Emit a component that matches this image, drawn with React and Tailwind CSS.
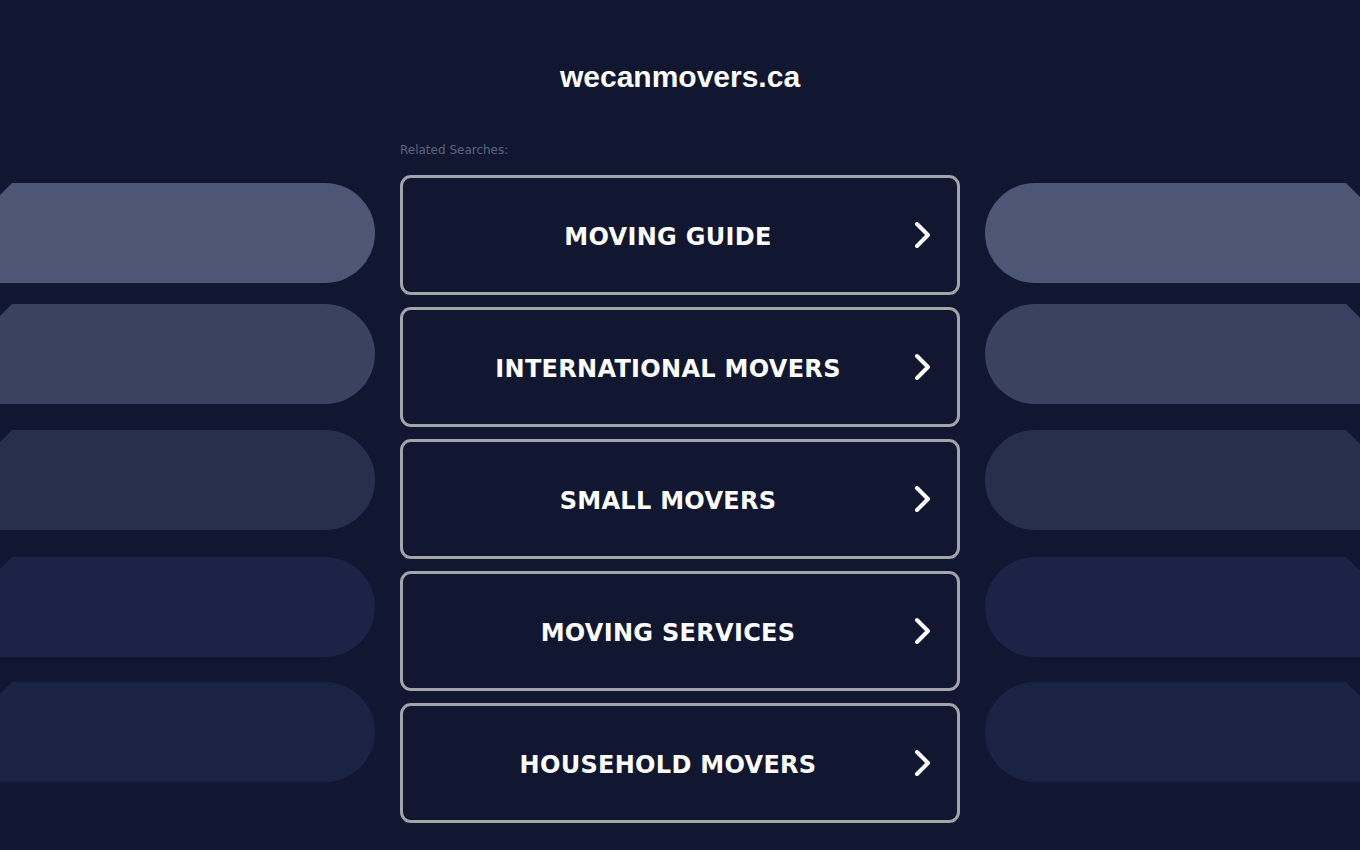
import React from 'react';

const links = ['MOVING GUIDE', 'INTERNATIONAL MOVERS', 'SMALL MOVERS', 'MOVING SERVICES', 'HOUSEHOLD MOVERS'];

// decorative pills on both sides, top offset + colour
const pills = [
    { mt: 'mt-[183px]', bg: 'bg-[#4d5674]' },
    { mt: 'mt-[21px]', bg: 'bg-[#394261]' },
    { mt: 'mt-[26px]', bg: 'bg-[#272f4e]' },
    { mt: 'mt-[27px]', bg: 'bg-[#1b2346]' },
    { mt: 'mt-[25px]', bg: 'bg-[#1b2344]' },
];

const Chevron = () => (
    <svg width="20" height="28" viewBox="0 0 20 28" fill="none" className="shrink-0">
        <path d="M4 3 L15 14 L4 25" stroke="white" strokeWidth="4" strokeLinecap="round" strokeLinejoin="round" />
    </svg>
);

const App = () => {
    return (
        <div className="min-h-screen h-[850px] overflow-hidden bg-[#111730] flex" style={{ fontFamily: 'Arial' }}>
            {/* left pills */}
            <div className="w-[375px] shrink-0 flex flex-col">
                {pills.map((p, i) => (
                    <div key={i} className={`${p.mt} h-[100px] ${p.bg} rounded-r-[50px] [clip-path:polygon(12px_0,100%_0,100%_100%,0_100%,0_12px)]`} />
                ))}
            </div>

            {/* centre */}
            <div className="w-[560px] shrink-0 mx-[25px] flex flex-col">
                <h1 className="mt-[60px] h-[34px] text-center text-white font-bold text-[30px] leading-[34px] font-['Liberation_Sans',Arial,sans-serif]">
                    wecanmovers.ca
                </h1>
                <div className="mt-[49px] text-[12px] leading-[15px] text-[#5b6480] font-['DejaVu_Sans',sans-serif]">
                    Related Searches:
                </div>
                <div className="mt-[17px] flex flex-col gap-[12px]">
                    {links.map(l => (
                        <a key={l} href="#" className="h-[120px] border-[3px] border-[#a3a5ab] rounded-[11px] flex items-center pl-[20px] pr-[24px]">
                            <span className="flex-1 pt-[4px] text-center text-white font-bold text-[24px] tracking-[0.3px] font-['DejaVu_Sans',Verdana,sans-serif]">
                                {l}
                            </span>
                            <Chevron />
                        </a>
                    ))}
                </div>
            </div>

            {/* right pills */}
            <div className="w-[375px] shrink-0 flex flex-col">
                {pills.map((p, i) => (
                    <div key={i} className={`${p.mt} h-[100px] ${p.bg} rounded-l-[50px] [clip-path:polygon(0_0,calc(100%-14px)_0,100%_14px,100%_100%,0_100%)]`} />
                ))}
            </div>
        </div>
    );
};

export default App;
